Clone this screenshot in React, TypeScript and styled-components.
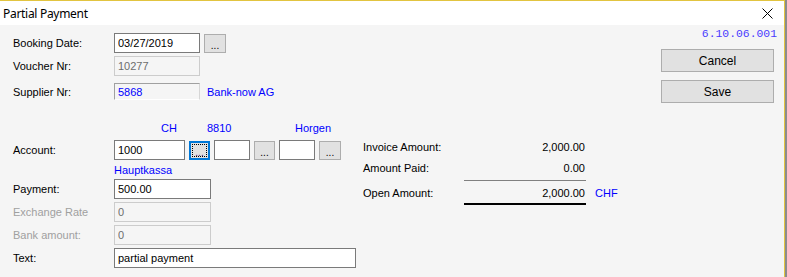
import styled, { createGlobalStyle } from 'styled-components';

const GlobalStyle = createGlobalStyle`
  html, body {
    margin: 0;
    padding: 0;
    background: #8c8c8c;
  }
  body {
    font-family: "Liberation Sans", Arial, sans-serif;
    font-size: 11px;
    color: #000;
  }
`;

const BLUE = '#0000ff';

const Window = styled.div`
  width: 785px;
  height: 277px;
  box-sizing: border-box;
  border-top: 1px solid #e2c440;
  border-right: 1px solid #e2c440;
  background: #f5f5f5;
  display: flex;
  flex-direction: column;
  overflow: hidden;
`;

const TitleBar = styled.div`
  height: 24px;
  flex: none;
  background: #fff;
  display: flex;
  align-items: center;
  justify-content: space-between;
  padding: 0 11px 0 3px;
  font-family: "Noto Sans", "Liberation Sans", sans-serif;
  font-size: 12px;
  letter-spacing: -0.3px;
`;

const Body = styled.div`
  flex: 1;
  display: flex;
`;

const LeftCol = styled.div`
  width: 343px;
  padding: 8px 0 0 13px;
  display: flex;
  flex-direction: column;
`;

const Row = styled.div<{ $top: number; $h?: number }>`
  display: flex;
  align-items: center;
  height: ${p => p.$h ?? 20}px;
  margin-top: ${p => p.$top}px;
`;

const Label = styled.span<{ $disabled?: boolean }>`
  width: 101px;
  flex: none;
  color: ${p => (p.$disabled ? '#a0a0a0' : '#000')};
`;

const Field = styled.input<{ $w: number }>`
  width: ${p => p.$w}px;
  height: 20px;
  box-sizing: border-box;
  border: 1px solid #7a7a7a;
  background: #fff;
  padding: 0 3px;
  margin: 0;
  font: 11px "Liberation Sans", Arial, sans-serif;
  color: #000;
  outline: none;
  &:disabled {
    border-color: #cccccc;
    background: #f5f5f5;
    color: #6d6d6d;
  }
`;

const SunkenBox = styled.div`
  width: 86px;
  height: 17px;
  box-sizing: border-box;
  border: 1px solid #a0a0a0;
  border-right-color: #d6d6d6;
  border-bottom-color: #fff;
  padding: 1px 3px 0;
  color: ${BLUE};
  line-height: 14px;
`;

const LinkText = styled.span<{ $left?: number }>`
  color: ${BLUE};
  margin-left: ${p => p.$left ?? 0}px;
`;

const DotsButton = styled.button<{ $w?: number; $focused?: boolean }>`
  position: relative;
  width: ${p => p.$w ?? 22}px;
  height: 19px;
  box-sizing: border-box;
  margin: 0;
  padding: 4px 0 0;
  border: ${p => (p.$focused ? '2px solid #0078d7' : '1px solid #adadad')};
  background: #e1e1e1;
  font: 10px "Liberation Sans", Arial, sans-serif;
  color: ${p => (p.$focused ? '#3a1a6a' : '#000')};
  line-height: 11px;
  &::after {
    content: '';
    display: ${p => (p.$focused ? 'block' : 'none')};
    position: absolute;
    inset: 1px;
    border: 1px dotted #000;
  }
`;

const Captions = styled.div`
  display: flex;
  height: 13px;
  margin: 22px 0 0 148px;
  line-height: 13px;
`;

const Caption = styled.span<{ $w: number }>`
  width: ${p => p.$w}px;
  color: ${BLUE};
`;

const AccountGroup = styled.div`
  display: flex;
  align-items: center;
  gap: 4px;
`;

const Subline = styled.div`
  height: 13px;
  line-height: 13px;
  margin: 4px 0 0 101px;
  color: ${BLUE};
`;

const MidCol = styled.div`
  margin-left: 7px;
  padding-top: 115px;
  display: flex;
  flex-direction: column;
`;

const AmountRow = styled.div<{ $top: number }>`
  display: grid;
  grid-template-columns: 101px 122px auto;
  align-items: center;
  height: 14px;
  margin-top: ${p => p.$top}px;
`;

const Amount = styled.span`
  text-align: right;
  padding-right: 1px;
`;

const Currency = styled.span`
  color: ${BLUE};
  padding-left: 9px;
`;

const Rule = styled.div<{ $top: number; $thick?: boolean }>`
  width: 122px;
  height: ${p => (p.$thick ? 2 : 1)}px;
  margin: ${p => p.$top}px 0 0 101px;
  background: ${p => (p.$thick ? '#000' : '#808080')};
`;

const RightCol = styled.div`
  margin: 0 10px 0 auto;
  width: 113px;
  display: flex;
  flex-direction: column;
`;

const Version = styled.div`
  margin: 3px -3px 0 0;
  height: 13px;
  line-height: 13px;
  text-align: right;
  font-family: "Liberation Mono", "Courier New", monospace;
  font-size: 11.4px;
  color: #4a3cff;
`;

const ActionButton = styled.button`
  width: 113px;
  height: 23px;
  margin: 8px 0 0;
  box-sizing: border-box;
  border: 1px solid #adadad;
  background: #e1e1e1;
  font: 12px "Liberation Sans", Arial, sans-serif;
  color: #000;
  padding: 0;
`;

const CloseIcon = () => (
  <svg width="11" height="11" viewBox="0 0 11 11">
    <path d="M0.5 0.5 L10.5 10.5 M10.5 0.5 L0.5 10.5" stroke="#000" strokeWidth="1" fill="none" />
  </svg>
);

export default function App() {
  return (
    <>
      <GlobalStyle />
      <Window>
        <TitleBar>
          <span>Partial Payment</span>
          <CloseIcon />
        </TitleBar>
        <Body>
          <LeftCol>
            <Row $top={0}>
              <Label>Booking Date:</Label>
              <Field $w={86} defaultValue="03/27/2019" />
              <span style={{ width: 4 }} />
              <DotsButton>...</DotsButton>
            </Row>
            <Row $top={3}>
              <Label>Voucher Nr:</Label>
              <Field $w={86} defaultValue="10277" disabled />
            </Row>
            <Row $top={7} $h={17}>
              <Label>Supplier Nr:</Label>
              <SunkenBox>5868</SunkenBox>
              <LinkText $left={7}>Bank-now AG</LinkText>
            </Row>
            <Captions>
              <Caption $w={46}>CH</Caption>
              <Caption $w={88}>8810</Caption>
              <Caption $w={60}>Horgen</Caption>
            </Captions>
            <Row $top={5}>
              <Label>Account:</Label>
              <AccountGroup>
                <Field $w={71} defaultValue="1000" />
                <DotsButton $w={21} $focused>...</DotsButton>
                <Field $w={36} />
                <DotsButton $w={21}>...</DotsButton>
                <Field $w={36} />
                <DotsButton $w={22}>...</DotsButton>
              </AccountGroup>
            </Row>
            <Subline>Hauptkassa</Subline>
            <Row $top={2}>
              <Label>Payment:</Label>
              <Field $w={97} defaultValue="500.00" />
            </Row>
            <Row $top={3}>
              <Label $disabled>Exchange Rate</Label>
              <Field $w={97} defaultValue="0" disabled />
            </Row>
            <Row $top={3}>
              <Label $disabled>Bank amount:</Label>
              <Field $w={97} defaultValue="0" disabled />
            </Row>
            <Row $top={3}>
              <Label>Text:</Label>
              <Field $w={242} defaultValue="partial payment" />
            </Row>
          </LeftCol>
          <MidCol>
            <AmountRow $top={0}>
              <span>Invoice Amount:</span>
              <Amount>2,000.00</Amount>
            </AmountRow>
            <AmountRow $top={7}>
              <span>Amount Paid:</span>
              <Amount>0.00</Amount>
            </AmountRow>
            <Rule $top={5} />
            <AmountRow $top={5}>
              <span>Open Amount:</span>
              <Amount>2,000.00</Amount>
              <Currency>CHF</Currency>
            </AmountRow>
            <Rule $top={3} $thick />
          </MidCol>
          <RightCol>
            <Version>6.10.06.001</Version>
            <ActionButton>Cancel</ActionButton>
            <ActionButton>Save</ActionButton>
          </RightCol>
        </Body>
      </Window>
    </>
  );
}
